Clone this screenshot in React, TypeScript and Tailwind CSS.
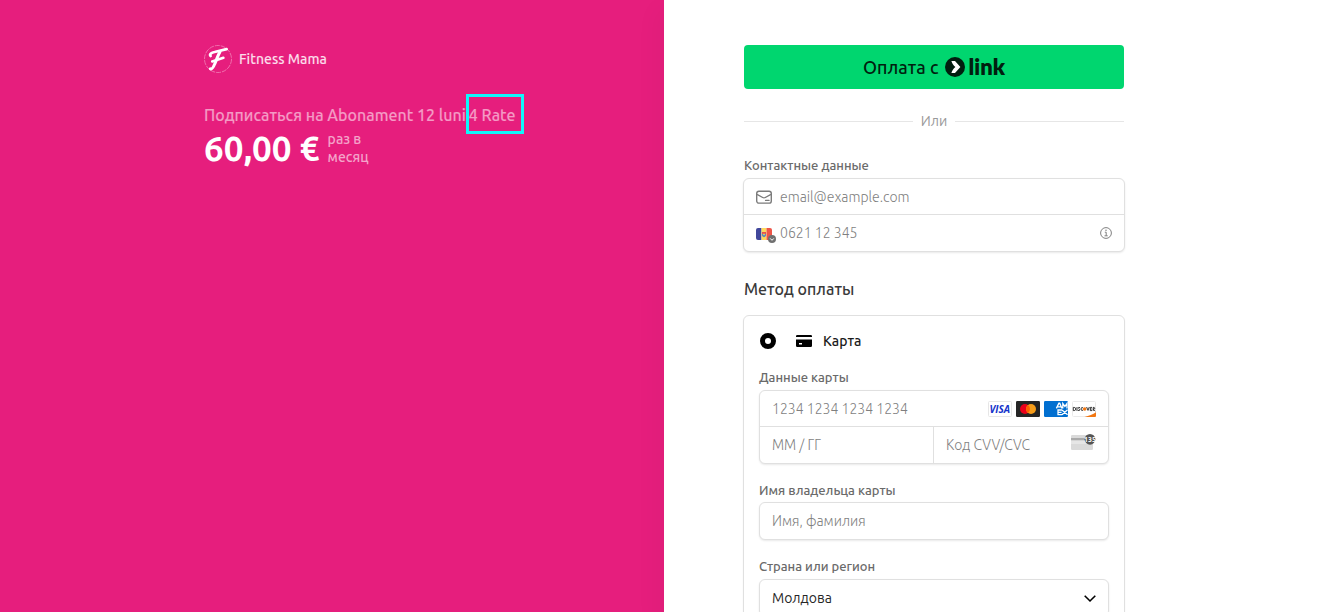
import React from "react";

const inputText =
  "w-full min-w-0 bg-transparent text-sm text-[#30313d] outline-none placeholder:font-light placeholder:text-[#7f7f7f]";
const fieldBox =
  "overflow-hidden rounded-md border border-[#e0e0e0] bg-white shadow-[0_1px_2px_rgba(0,0,0,0.09)]";
const labelText = "block text-[13px] leading-5 font-medium text-[#6a6a6a]";

function BrandLogo() {
  return (
    <svg className="size-7 shrink-0" viewBox="0 0 28 28" fill="none" aria-hidden="true">
      <circle cx="14" cy="14" r="13.5" stroke="#f48fc0" strokeWidth="0.7" strokeDasharray="5 1" />
      <path
        d="M6.6 11C5.2 9.2 7.6 7.6 10.6 7L22.6 4.2"
        stroke="#fff"
        strokeWidth="2.8"
        strokeLinecap="round"
      />
      <path
        d="M16 6.8C13.8 10 12.8 14.2 10.8 18.8C9.6 21.8 8 24.4 6.4 23.8"
        stroke="#fff"
        strokeWidth="3"
        strokeLinecap="round"
      />
      <path d="M8.2 16.4L19.4 12.8" stroke="#fff" strokeWidth="2.6" strokeLinecap="round" />
    </svg>
  );
}

function LinkMark() {
  return (
    <svg className="size-5 shrink-0" viewBox="0 0 20 20" aria-hidden="true">
      <circle cx="10" cy="10" r="10" fill="#011e0f" />
      <path d="M6.4 4H10L15.4 10L10 16H6.4C7.1 13.6 8.4 11.5 10.4 10C8.4 8.5 7.1 6.4 6.4 4Z" fill="#fff" />
    </svg>
  );
}

function MailIcon() {
  return (
    <svg className="h-4 w-4 shrink-0" viewBox="0 0 16 16" fill="none" stroke="#7b7b7b" strokeWidth="1.4" aria-hidden="true">
      <rect x="0.7" y="2.2" width="14.6" height="11.9" rx="2.2" />
      <path d="M1 5.4L6.7 8.5Q8 9.2 9.3 8.5L15 5.4" />
      <path d="M9.6 11.4H13" strokeLinecap="round" />
    </svg>
  );
}

function MoldovaFlag() {
  return (
    <svg className="h-5 w-5 shrink-0" viewBox="0 0 20 20" aria-hidden="true">
      <path d="M2 5H5.5V17H2Q0 17 0 15V7Q0 5 2 5Z" fill="#41479b" />
      <path d="M5.5 5H10.5V17H5.5Z" fill="#ffda5c" />
      <path d="M10.5 5H14Q16 5 16 7V15Q16 17 14 17H10.5Z" fill="#ee5548" />
      <path d="M6 9H10V12Q9.8 13.6 8 14.2Q6.2 13.6 6 12Z" fill="#e5544c" />
      <path d="M6 11H10V12Q9.8 13.6 8 14.2Q6.2 13.6 6 12Z" fill="#4f91c4" />
      <circle cx="8" cy="11.4" r="0.8" fill="#ffda5c" />
      <circle cx="16" cy="16" r="4" fill="#707070" />
      <path d="M14.2 15.4L16 17.3L17.8 15.4" fill="none" stroke="#fff" strokeWidth="1" />
    </svg>
  );
}

function InfoIcon() {
  return (
    <svg className="size-3" viewBox="0 0 12 12" fill="none" stroke="#808080" aria-hidden="true">
      <circle cx="6" cy="6" r="5.4" />
      <path d="M4.8 5.2H6.2V8.8M4.5 8.8H7.7" />
      <circle cx="6" cy="3.2" r="0.75" fill="#808080" stroke="none" />
    </svg>
  );
}

function CardIcon() {
  return (
    <svg className="size-4 shrink-0" viewBox="0 0 16 16" aria-hidden="true">
      <path d="M1.2 2H14.8Q16 2 16 3.2V4H0V3.2Q0 2 1.2 2Z" />
      <path fillRule="evenodd" d="M0 6.5H16V12.8Q16 14 14.8 14H1.2Q0 14 0 12.8ZM3 10V11.6H6V10Z" />
    </svg>
  );
}

function CardBrands() {
  return (
    <div className="flex shrink-0 gap-1">
      <svg className="h-4 w-6" viewBox="0 0 24 16" role="img" aria-label="Visa">
        <rect x="0.5" y="0.5" width="23" height="15" rx="1" fill="#fff" stroke="#e6e6e6" />
        <text x="11.8" y="11.6" textAnchor="middle" fontSize="10" fontWeight="700" fontStyle="italic" fill="#1434cb" fontFamily="Open Sans, sans-serif">VISA</text>
      </svg>
      <svg className="h-4 w-6" viewBox="0 0 24 16" role="img" aria-label="Mastercard">
        <rect width="24" height="16" rx="1.2" fill="#252525" />
        <circle cx="9" cy="8" r="5" fill="#eb001b" />
        <circle cx="15" cy="8" r="5" fill="#f79e1b" />
        <path d="M12 4A5 5 0 0 1 12 12A5 5 0 0 1 12 4Z" fill="#ff5f00" />
      </svg>
      <svg className="h-4 w-6" viewBox="0 0 24 16" role="img" aria-label="American Express">
        <rect width="24" height="16" rx="1.2" fill="#016fd0" />
        <g fill="none" stroke="#fff" strokeWidth="1.3">
          <path d="M12.4 7.4L14.9 2.2H15.7L18 7.4M13.4 5.8H17M18.8 7.4V2.5L20.9 5.4L23 2.5V7.4" />
          <path d="M18 9H14V13.6H18M14 11.3H17.6M18 9L23.6 13.8M23.6 8.8L18 13.8" />
        </g>
      </svg>
      <svg className="h-4 w-6" viewBox="0 0 24 16" role="img" aria-label="Discover">
        <rect x="0.5" y="0.5" width="23" height="15" rx="1" fill="#fff" stroke="#eaeaea" />
        <path d="M12.5 16C17 15 21 13.4 24 11.3V15Q24 16 23 16Z" fill="#f27712" />
        <g fill="none" stroke="#222" strokeWidth="0.9">
          <path d="M1.3 6.4V9.6H2.2Q3.8 9.4 3.8 8Q3.8 6.6 2.2 6.4ZM5 6V10M8 6.6Q6.2 5.9 6.4 7.2L7.8 8.5Q8 10 6 9.4M11 6.7Q9.1 6 9 8Q9.1 10 11 9.3" />
          <path d="M14.6 6L16 9.4L17.3 6M20 6.4H18.3V9.6H20M18.3 8H19.8M21.2 10V6.4H22.2Q23.3 7.2 22.2 8.1H21.2L23.2 10" />
        </g>
        <circle cx="12.7" cy="8" r="1.8" fill="#f27712" />
      </svg>
    </div>
  );
}

function CvcIcon() {
  return (
    <svg className="h-6 w-[25px] shrink-0" viewBox="0 0 25 24" aria-hidden="true">
      <rect y="2" width="22" height="15" rx="1.2" fill="#dadada" />
      <path d="M0 5H22V7.5H0Z" fill="#aaa" />
      <path d="M0 7.5H22V11H0Z" fill="#e6e6e6" />
      <circle cx="19" cy="6.3" r="5.4" fill="#555" />
      <text x="19" y="9" textAnchor="middle" fontSize="7" fontWeight="700" fill="#fff" fontFamily="Ubuntu, Roboto, sans-serif">135</text>
    </svg>
  );
}

function OrderSummary() {
  return (
    <section className="flex justify-end bg-[#e61e7d] pr-20 pt-11 text-white">
      <div className="w-full max-w-[380px]">
        <div className="flex h-[30px] items-center gap-[7px] text-sm font-medium text-white/85">
          <BrandLogo />
          <span>Fitness Mama</span>
        </div>
        <h1 className="mt-5 flex items-center text-base font-medium text-white/55">
          <span className="whitespace-nowrap pt-px">Подписаться на Abonament 12 luni</span>
          <span className="flex h-10 items-center whitespace-nowrap border-3 border-[#0ff5fb] pt-px pr-[5px]">4 Rate</span>
        </h1>
        <div className="flex h-7 items-center gap-2">
          <span className="whitespace-nowrap text-[35px] font-semibold">60,00 €</span>
          <span className="w-12 text-sm leading-[18px] font-medium text-white/60">раз в месяц</span>
        </div>
      </div>
    </section>
  );
}

function PaymentForm() {
  return (
    <section className="bg-white pl-20 pt-[45px] shadow-[-16px_0_24px_-8px_rgba(0,0,0,0.03)]">
      <form className="w-full max-w-[380px]" onSubmit={(e) => e.preventDefault()}>
        <button
          type="button"
          className="flex h-11 w-full items-center justify-center gap-1.5 rounded bg-[#00d66f] text-lg font-medium text-[#011e0f]"
        >
          <span>Оплата с</span>
          <span className="flex items-center gap-1">
            <LinkMark />
            <span className="font-[Lato] text-[22px] leading-6 font-extrabold">link</span>
          </span>
        </button>

        <div className="mt-5 flex h-6 items-center gap-2 text-sm text-[#999]">
          <span className="h-px flex-1 bg-[#e6e6e6]" />
          <span>Или</span>
          <span className="h-px flex-1 bg-[#e6e6e6]" />
        </div>

        <label htmlFor="email" className={`${labelText} mt-[22px]`}>
          Контактные данные
        </label>
        <div className={`${fieldBox} -mx-px mt-[3px]`}>
          <div className="flex h-9 items-center gap-2 border-b border-[#e0e0e0] px-3">
            <MailIcon />
            <input id="email" type="email" placeholder="email@example.com" className={inputText} />
          </div>
          <div className="flex h-9 items-center gap-1 px-3">
            <MoldovaFlag />
            <input type="tel" aria-label="Номер телефона" placeholder="0621 12 345" className={inputText} />
            <button type="button" aria-label="Информация">
              <InfoIcon />
            </button>
          </div>
        </div>

        <h2 className="mt-[25px] text-base font-medium text-[#3a3a3a]">Метод оплаты</h2>

        <div className="-mx-px mt-[14px] rounded-md border border-[#e0e0e0] px-[15px] pt-3 pb-5 shadow-[0_1px_2px_rgba(0,0,0,0.06)]">
          <div className="flex h-[26px] items-center pl-px">
            <input
              id="card"
              type="radio"
              name="method"
              defaultChecked
              className="size-4 appearance-none rounded-full border-5 border-black bg-white"
            />
            <label htmlFor="card" className="ml-5 flex items-center gap-[11px] text-sm font-medium text-[#1a1a1a]">
              <CardIcon />
              Карта
            </label>
          </div>

          <label htmlFor="number" className={`${labelText} mt-[13px]`}>
            Данные карты
          </label>
          <div className={`${fieldBox} mt-[3px]`}>
            <div className="flex h-9 items-center border-b border-[#e0e0e0] px-3">
              <input id="number" placeholder="1234 1234 1234 1234" className={inputText} />
              <CardBrands />
            </div>
            <div className="grid h-9 grid-cols-2">
              <div className="flex items-center border-r border-[#e0e0e0] px-3">
                <input aria-label="Срок действия" placeholder="ММ / ГГ" className={inputText} />
              </div>
              <div className="flex items-center px-3">
                <input aria-label="Код CVV/CVC" placeholder="Код CVV/CVC" className={inputText} />
                <CvcIcon />
              </div>
            </div>
          </div>

          <label htmlFor="holder" className={`${labelText} mt-4`}>
            Имя владельца карты
          </label>
          <div className={`${fieldBox} mt-[2px] flex h-[38px] items-center px-3`}>
            <input id="holder" placeholder="Имя, фамилия" className={inputText} />
          </div>

          <label htmlFor="country" className={`${labelText} mt-4`}>
            Страна или регион
          </label>
          <div className={`${fieldBox} mt-[3px] grid h-[38px] items-center`}>
            <select
              id="country"
              className="col-start-1 row-start-1 h-full w-full appearance-none bg-transparent px-3 text-sm text-[#262626] outline-none"
            >
              <option>Молдова</option>
            </select>
            <svg
              className="pointer-events-none col-start-1 row-start-1 mr-3 size-3 justify-self-end"
              viewBox="0 0 12 12"
              fill="none"
              stroke="#000"
              strokeWidth="1.6"
              aria-hidden="true"
            >
              <path d="M0.7 3.8L6 9L11.3 3.8" />
            </svg>
          </div>
        </div>
      </form>
    </section>
  );
}

export default function App() {
  return (
    <main className="grid h-screen grid-cols-2 overflow-hidden bg-white pr-2.5 font-[Ubuntu,'Noto_Sans',sans-serif]">
      <OrderSummary />
      <PaymentForm />
    </main>
  );
}
